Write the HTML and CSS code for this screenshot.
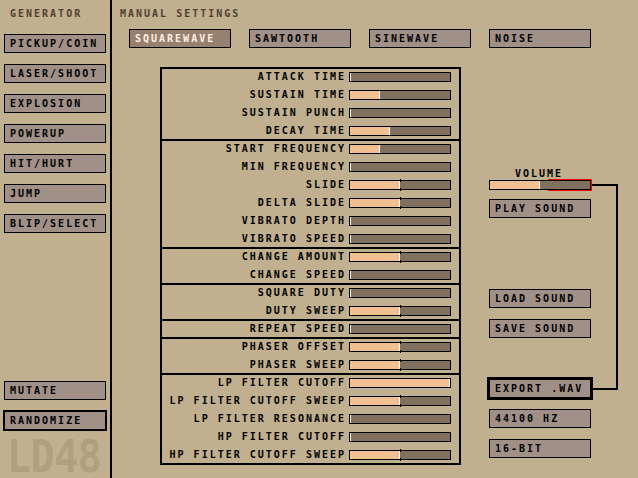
FILE: index.html
```html
<!DOCTYPE html>
<html>
<head>
<meta charset="utf-8">
<link rel="stylesheet" href="styles.css">
</head>
<body>
<div class="app">
  <aside class="side">
    <div class="title">GENERATOR</div>
    <div class="gen-list">
      <div class="btn">PICKUP/COIN</div>
      <div class="btn">LASER/SHOOT</div>
      <div class="btn">EXPLOSION</div>
      <div class="btn">POWERUP</div>
      <div class="btn">HIT/HURT</div>
      <div class="btn">JUMP</div>
      <div class="btn">BLIP/SELECT</div>
    </div>
    <div class="btn mutate">MUTATE</div>
    <div class="btn hot randomize">RANDOMIZE</div>
    <div class="logo">LD48</div>
  </aside>
  <main class="main">
    <div class="title title-main">MANUAL SETTINGS</div>
    <div class="waves">
      <div class="btn sel">SQUAREWAVE</div>
      <div class="btn">SAWTOOTH</div>
      <div class="btn">SINEWAVE</div>
      <div class="btn">NOISE</div>
    </div>
    <div class="work">
      <div class="panel">
        <div class="group">
          <div class="row"><span class="lbl">ATTACK TIME</span><div class="slider"><div class="fill" style="width:0px"></div><div class="tick"></div></div></div>
          <div class="row"><span class="lbl">SUSTAIN TIME</span><div class="slider"><div class="fill" style="width:29px"></div><div class="tick"></div></div></div>
          <div class="row"><span class="lbl">SUSTAIN PUNCH</span><div class="slider"><div class="fill" style="width:0px"></div><div class="tick"></div></div></div>
          <div class="row"><span class="lbl">DECAY TIME</span><div class="slider"><div class="fill" style="width:39px"></div><div class="tick"></div></div></div>
        </div>
        <div class="group">
          <div class="row"><span class="lbl">START FREQUENCY</span><div class="slider"><div class="fill" style="width:29px"></div><div class="tick"></div></div></div>
          <div class="row"><span class="lbl">MIN FREQUENCY</span><div class="slider"><div class="fill" style="width:0px"></div><div class="tick"></div></div></div>
          <div class="row"><span class="lbl">SLIDE</span><div class="slider bi"><div class="fill" style="width:49px"></div><div class="tick"></div></div></div>
          <div class="row"><span class="lbl">DELTA SLIDE</span><div class="slider bi"><div class="fill" style="width:49px"></div><div class="tick"></div></div></div>
          <div class="row"><span class="lbl">VIBRATO DEPTH</span><div class="slider"><div class="fill" style="width:0px"></div><div class="tick"></div></div></div>
          <div class="row"><span class="lbl">VIBRATO SPEED</span><div class="slider"><div class="fill" style="width:0px"></div><div class="tick"></div></div></div>
        </div>
        <div class="group">
          <div class="row"><span class="lbl">CHANGE AMOUNT</span><div class="slider bi"><div class="fill" style="width:49px"></div><div class="tick"></div></div></div>
          <div class="row"><span class="lbl">CHANGE SPEED</span><div class="slider"><div class="fill" style="width:0px"></div><div class="tick"></div></div></div>
        </div>
        <div class="group">
          <div class="row"><span class="lbl">SQUARE DUTY</span><div class="slider"><div class="fill" style="width:0px"></div><div class="tick"></div></div></div>
          <div class="row"><span class="lbl">DUTY SWEEP</span><div class="slider bi"><div class="fill" style="width:49px"></div><div class="tick"></div></div></div>
        </div>
        <div class="group">
          <div class="row"><span class="lbl">REPEAT SPEED</span><div class="slider"><div class="fill" style="width:0px"></div><div class="tick"></div></div></div>
        </div>
        <div class="group">
          <div class="row"><span class="lbl">PHASER OFFSET</span><div class="slider bi"><div class="fill" style="width:49px"></div><div class="tick"></div></div></div>
          <div class="row"><span class="lbl">PHASER SWEEP</span><div class="slider bi"><div class="fill" style="width:49px"></div><div class="tick"></div></div></div>
        </div>
        <div class="group">
          <div class="row"><span class="lbl">LP FILTER CUTOFF</span><div class="slider"><div class="fill" style="width:99px"></div><div class="tick"></div></div></div>
          <div class="row"><span class="lbl">LP FILTER CUTOFF SWEEP</span><div class="slider bi"><div class="fill" style="width:49px"></div><div class="tick"></div></div></div>
          <div class="row"><span class="lbl">LP FILTER RESONANCE</span><div class="slider"><div class="fill" style="width:0px"></div><div class="tick"></div></div></div>
          <div class="row"><span class="lbl">HP FILTER CUTOFF</span><div class="slider"><div class="fill" style="width:0px"></div><div class="tick"></div></div></div>
          <div class="row"><span class="lbl">HP FILTER CUTOFF SWEEP</span><div class="slider bi"><div class="fill" style="width:49px"></div><div class="tick"></div></div></div>
        </div>
      </div>
      <div class="right">
        <div class="connector"></div>
        <div class="vol-label">VOLUME</div>
        <div class="vol">
          <div class="red"></div>
          <div class="slider"><div class="fill" style="width:49px"></div><div class="tick"></div></div>
        </div>
        <div class="btn play">PLAY SOUND</div>
        <div class="btn load">LOAD SOUND</div>
        <div class="btn save">SAVE SOUND</div>
        <div class="btn hot3 export">EXPORT .WAV</div>
        <div class="btn rate">44100 HZ</div>
        <div class="btn bits">16-BIT</div>
      </div>
    </div>
  </main>
</div>
</body>
</html>
```
FILE: styles.css
```css
* { box-sizing: border-box; }
html, body { margin: 0; padding: 0; }
body {
  width: 638px;
  height: 478px;
  overflow: hidden;
  background: #C0B090;
  font-family: "DejaVu Sans Mono", "Liberation Mono", monospace;
  font-weight: bold;
  font-size: 10px;
  line-height: 8px;
  letter-spacing: 2px;
  color: #000;
}
.app { display: flex; width: 638px; height: 478px; }

/* left column */
.side {
  width: 112px;
  flex: none;
  border-right: 2px solid #000;
  padding: 10px 0 0 4px;
  display: flex;
  flex-direction: column;
  align-items: flex-start;
}
.title { color: #504030; height: 8px; white-space: nowrap; }
.side .title { margin-left: 6px; }
.gen-list { display: flex; flex-direction: column; gap: 11px; margin-top: 16px; }

.btn {
  width: 102px;
  height: 19px;
  border: 1px solid #000;
  background: #A09088;
  padding: 5px 0 0 5px;
  white-space: nowrap;
  flex: none;
}
.btn.sel { background: #988070; color: #FFF0E0; }
.btn.hot { border-width: 2px; width: 104px; height: 21px; }
.btn.hot3 { border-width: 3px; width: 106px; height: 23px; }
.mutate { margin-top: 148px; }
.randomize { margin-top: 10px; margin-left: -1px; }
.logo {
  margin-top: 10px;
  margin-left: 3px;
  color: #B0A080;
  font-size: 40px;
  line-height: 34px;
  height: 34px;
  letter-spacing: -0.5px;
  white-space: nowrap;
  transform: scaleY(1.13);
  transform-origin: 0 31px;
}

/* main */
.main {
  flex: 1;
  display: flex;
  flex-direction: column;
  align-items: flex-start;
  padding-top: 10px;
}
.title-main { margin-left: 8px; }
.waves { display: flex; gap: 18px; margin: 11px 0 0 17px; }
.work { display: flex; align-items: flex-start; margin: 19px 0 0 48px; }

.panel { width: 301px; border: 2px solid #000; border-bottom: 0; flex: none; }
.group { border-bottom: 2px solid #000; }
.row {
  height: 18px;
  display: flex;
  justify-content: flex-end;
  align-items: flex-start;
  padding: 3px 8px 0 0;
}
.group .row:last-child { height: 16px; }
.lbl { margin: 1px 3px 0 0; white-space: nowrap; }

.slider {
  position: relative;
  width: 102px;
  height: 10px;
  border: 1px solid #000;
  background: #807060;
  display: flex;
  flex: none;
}
.fill { height: 8px; background: #F0C090; flex: none; }
.tick { width: 1px; height: 8px; background: #FFFFFF; flex: none; }
.slider.bi::before,
.slider.bi::after {
  content: "";
  position: absolute;
  left: 50px;
  width: 1px;
  height: 3px;
  background: #000;
}
.slider.bi::before { top: -2px; }
.slider.bi::after { top: 7px; }

/* right column */
.right {
  position: relative;
  z-index: 0;
  margin-left: 28px;
  display: flex;
  flex-direction: column;
  align-items: flex-start;
}
.connector {
  position: absolute;
  z-index: -1;
  left: 59px;
  top: 117px;
  width: 70px;
  height: 206px;
  border: 2px solid #000;
  border-left: 0;
}
.vol-label { margin: 103px 0 0 26px; white-space: nowrap; }
.vol { position: relative; margin-top: 2px; }
.vol .red {
  position: absolute;
  z-index: -1;
  left: 59px;
  top: -1px;
  width: 44px;
  height: 12px;
  border: 1px solid #FF0000;
}
.play { margin-top: 9px; }
.load { margin-top: 71px; }
.save { margin-top: 11px; }
.export { margin-top: 39px; margin-left: -2px; }
.rate { margin-top: 9px; }
.bits { margin-top: 11px; }
```
